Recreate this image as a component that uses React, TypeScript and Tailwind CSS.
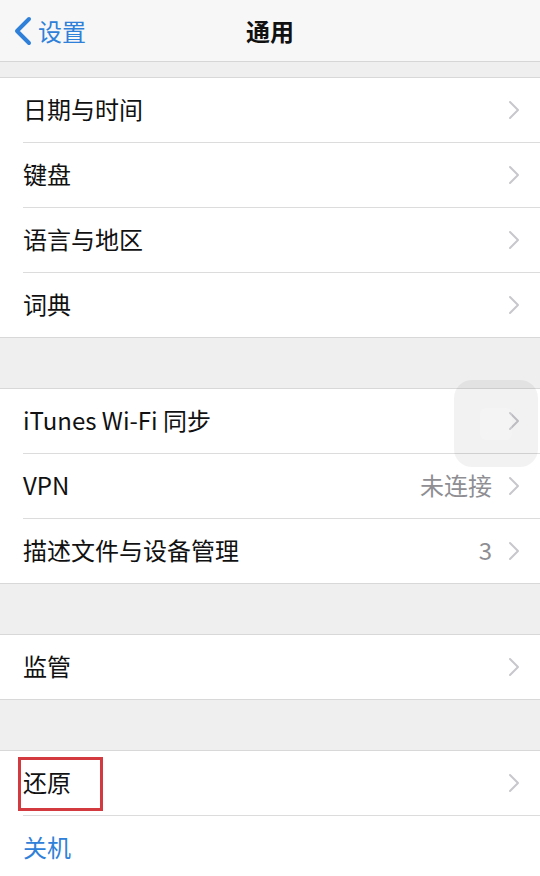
import React from "react";

type Row = { label: string; value?: string; chevron?: boolean; blue?: boolean };

const sections: Row[][] = [
  [
    { label: "日期与时间", chevron: true },
    { label: "键盘", chevron: true },
    { label: "语言与地区", chevron: true },
    { label: "词典", chevron: true },
  ],
  [
    { label: "iTunes Wi-Fi 同步", chevron: true },
    { label: "VPN", value: "未连接", chevron: true },
    { label: "描述文件与设备管理", value: "3", chevron: true },
  ],
  [{ label: "监管", chevron: true }],
  [
    { label: "还原", chevron: true },
    { label: "关机", blue: true },
  ],
];

function Chevron() {
  return (
    <svg width="12" height="20" viewBox="0 0 12 20" className="shrink-0">
      <path d="M2 2 L10 10 L2 18" fill="none" stroke="#c7c7cc" strokeWidth="2" strokeLinecap="round" strokeLinejoin="round" />
    </svg>
  );
}

function SettingRow({ row, last }: { row: Row; last: boolean }) {
  return (
    <div className={`h-[65px] pl-[23px] bg-white ${last ? "border-b border-[#d8d8d8]" : ""}`}>
      <div className={`h-full flex items-center pr-[20px] ${last ? "" : "border-b border-[#dcdcdc]"}`}>
        <span className={`text-[24px] flex-1 -mt-[2px] ${row.blue ? "text-[#2f80d8]" : "text-[#111]"}`}>{row.label}</span>
        {row.value && <span className="text-[24px] -mt-[2px] text-[#8e8e93] mr-[16px]">{row.value}</span>}
        {row.chevron && <Chevron />}
      </div>
    </div>
  );
}

export default function App() {
  return (
    <div
      className="relative w-[540px] h-[876px] overflow-hidden bg-[#efefef]"
      style={{ fontFamily: '"Noto Sans CJK SC", "Noto Sans", sans-serif' }}
    >
      {/* nav bar */}
      <div className="h-[62px] bg-[#f7f7f7] border-b border-[#d6d6d6] flex items-center relative">
        <div className="flex items-center pl-[13px] text-[#2f80d8]">
          <svg width="20" height="30" viewBox="0 0 20 30">
            <path d="M16 3 L4 15 L16 27" fill="none" stroke="#2f80d8" strokeWidth="4" strokeLinecap="round" strokeLinejoin="round" />
          </svg>
          <span className="text-[24px] ml-[5px]">设置</span>
        </div>
        <span className="absolute left-0 right-0 text-center text-[24px] font-bold text-[#111] pointer-events-none">通用</span>
      </div>
      <div className="h-[15px]" />

      {sections.map((rows, i) => (
        <div key={i}>
          <div className="border-t border-[#d8d8d8]">
            {rows.map((r, j) => (
              <SettingRow key={r.label} row={r} last={j === rows.length - 1} />
            ))}
          </div>
          {i < sections.length - 1 && <div className="h-[50px]" />}
        </div>
      ))}

      {/* assistive touch */}
      <div className="absolute left-[454px] top-[380px] w-[84px] h-[87px] rounded-[18px] bg-black/[0.05] flex items-center justify-center">
        <div className="w-[32px] h-[32px] rounded-[6px] bg-white/20" />
      </div>

      {/* highlight box */}
      <div className="absolute left-[18px] top-[757px] w-[85px] h-[54px] border-[3px] border-[#d23a40]" />
    </div>
  );
}
